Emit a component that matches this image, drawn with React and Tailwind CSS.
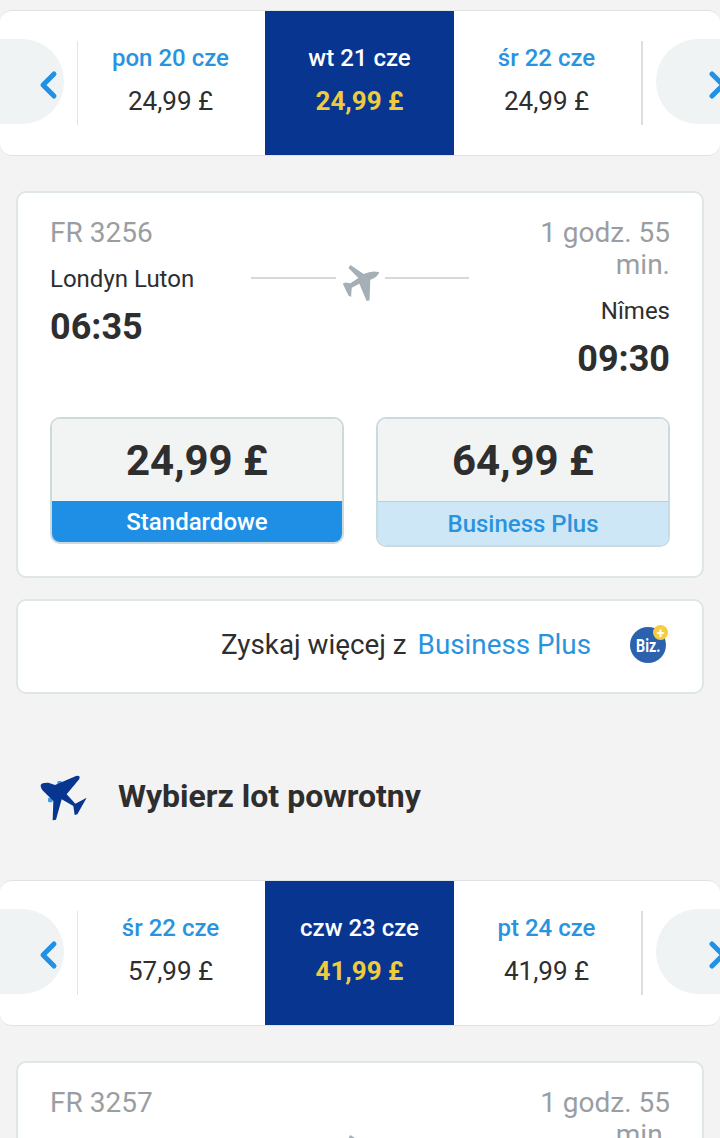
const firstDates = [
  { label: "pon 20 cze", price: "24,99 £" },
  { label: "wt 21 cze", price: "24,99 £", selected: true },
  { label: "śr 22 cze", price: "24,99 £" },
];

const returnDates = [
  { label: "śr 22 cze", price: "57,99 £" },
  { label: "czw 23 cze", price: "41,99 £", selected: true },
  { label: "pt 24 cze", price: "41,99 £" },
];

function GreyPlane() {
  return (
    <svg viewBox="330 70 120 115" className="w-[40px] h-[38px] mx-[4.5px] translate-y-[5px] shrink-0" fill="#a5afb6">
      <path d="M445 95Q443 108 418 118L416 180L407 182L385 130L362 142L360 170L352 165L335 130L342 126L358 128L382 112L352 82L358 73L398 100Q425 88 445 95Z" />
    </svg>
  );
}

function BluePlane() {
  return (
    <svg viewBox="0 0 270 210" className="w-[90px] h-[70px] shrink-0">
      <rect x="112" y="60" width="14" height="14" rx="4" fill="#3f9be6" />
      <rect x="84" y="110" width="14" height="14" rx="4" fill="#3f9be6" />
      <path
        fill="#073590"
        d="M62 72Q66 64 85 65L105 72L168 45Q182 42 178 54L140 100L166 128L200 110L172 160L164 162L160 135L125 115L108 176L98 178L100 120L72 92Q62 84 62 72Z"
      />
    </svg>
  );
}

function Chevron({ flip }) {
  return (
    <svg viewBox="0 0 20 30" className="w-[20px] h-[30px] mt-[6px] shrink-0" fill="none">
      <path
        d={flip ? "M4 4l11 11L4 26" : "M16 4L5 15l11 11"}
        stroke="#2091e5"
        strokeWidth="5"
        strokeLinecap="round"
        strokeLinejoin="round"
      />
    </svg>
  );
}

function DateCell({ label, price, selected }) {
  if (selected) {
    return (
      <div className="w-[189px] h-[144px] shrink-0 bg-[#073590] flex flex-col items-center pt-[29px]">
        <div className="text-[24px] leading-[36px] font-medium text-white">{label}</div>
        <div className="text-[26px] leading-[36px] mt-[7px] font-bold text-[#eecb3c]">{price}</div>
      </div>
    );
  }
  return (
    <div className="w-[187px] h-[144px] shrink-0 flex flex-col items-center pt-[29px] pr-[2px]">
      <div className="text-[24px] leading-[36px] font-medium text-[#2a93e0]">{label}</div>
      <div className="text-[26px] leading-[36px] mt-[7px] text-[#2e2e2e]">{price}</div>
    </div>
  );
}

function DateStrip({ dates }) {
  return (
    <div className="h-[146px] bg-white border-y border-[#dfe3e3] rounded-[12px] flex overflow-hidden shrink-0">
      <div className="w-[78px] h-[144px] flex items-center relative shrink-0">
        <div className="w-[64px] h-[85px] mb-[3px] bg-[#eff3f4] rounded-r-[42px] flex items-center justify-end pr-[6px]">
          <Chevron />
        </div>
        <div className="absolute right-0 top-[30px] w-px h-[84px] bg-[#e3e5e5]" />
      </div>
      {dates.map((d) => (
        <DateCell key={d.label} {...d} />
      ))}
      <div className="flex-1 h-[144px] flex items-center relative">
        <div className="absolute left-0 top-[30px] w-[2px] h-[84px] bg-[#dcdfdf]" />
        <div className="ml-[15px] w-[90px] shrink-0 h-[85px] mb-[3px] bg-[#eff3f4] rounded-l-[42px] flex items-center pl-[52px]">
          <Chevron flip />
        </div>
      </div>
    </div>
  );
}

function FlightCard({ number, from, to, departs, arrives, children }) {
  return (
    <div className="mx-[16px] bg-white border-2 border-[#dfe6e6] rounded-[10px] px-[32px] pt-[22px] shrink-0">
      <div className="flex justify-between">
        <div className="w-[170px]">
          <div className="text-[28px] leading-[36px] text-[#9a9ea3]">{number}</div>
          <div className="text-[24px] leading-[32px] mt-[12px] text-[#2e2e2e]">{from}</div>
          <div className="text-[36px] leading-[42px] mt-[11px] font-bold text-[#2e2e2e]">{departs}</div>
        </div>
        <div className="flex items-center mt-[43px] h-[40px]">
          <div className="w-[85px] h-[2px] bg-[#d8d8d8]" />
          <GreyPlane />
          <div className="w-[84px] h-[2px] bg-[#d8d8d8]" />
        </div>
        <div className="w-[170px] text-right">
          <div className="text-[28px] leading-[32px] pt-[2px] text-[#9a9ea3]">1 godz. 55 min.</div>
          <div className="text-[24px] leading-[32px] mt-[14px] text-[#2e2e2e]">{to}</div>
          <div className="text-[36px] leading-[42px] mt-[11px] font-bold text-[#2e2e2e]">{arrives}</div>
        </div>
      </div>
      {children}
    </div>
  );
}

function FareBoxes() {
  return (
    <div className="flex justify-between items-start mt-[37px] pb-[29px]">
      <div className="w-[294px] rounded-[10px] border-2 border-[#ced9d9] overflow-hidden">
        <div className="h-[82px] bg-[#f2f4f4] flex items-center justify-center text-[42px] font-bold text-[#2e2e2e]">
          24,99 £
        </div>
        <div className="h-[41px] bg-[#1f8fe6] flex items-center justify-center text-[24px] font-medium text-white">
          Standardowe
        </div>
      </div>
      <div className="w-[294px] rounded-[10px] border-2 border-[#c8dbe2] overflow-hidden">
        <div className="h-[82px] bg-[#f2f4f4] flex items-center justify-center text-[42px] font-bold text-[#2e2e2e]">
          64,99 £
        </div>
        <div className="h-[44px] bg-[#cee7f6] border-t border-[#a9d3ec] flex items-center justify-center text-[24px] font-medium text-[#2a93e0]">
          Business Plus
        </div>
      </div>
    </div>
  );
}

export default function App() {
  return (
    <div
      className="w-[720px] h-[1138px] overflow-hidden bg-[#f3f3f3] flex flex-col pt-[10px]"
      style={{ fontFamily: "Roboto, sans-serif" }}
    >
      <DateStrip dates={firstDates} />

      <div className="h-[35px] shrink-0" />
      <FlightCard number="FR 3256" from="Londyn Luton" to="Nîmes" departs="06:35" arrives="09:30">
        <FareBoxes />
      </FlightCard>

      <div className="mt-[21px] mx-[16px] h-[95px] shrink-0 bg-white border-2 border-[#dfe6e6] rounded-[10px] flex items-center justify-end pr-[36px] pb-[3px]">
        <span className="text-[27.8px] text-[#2e2e2e]">Zyskaj więcej z</span>
        <span className="text-[27.8px] text-[#2a93e0] ml-[11px]">Business Plus</span>
        <div className="relative ml-[39px] w-[36px] h-[36px] rounded-full bg-[#2c62ad] flex items-center justify-center">
          <span className="text-[19px] leading-none font-bold text-white scale-x-[0.75]">Biz.</span>
          <div className="absolute -top-[2px] -right-[2px] w-[15px] h-[15px] rounded-full bg-[#f5cd3f] flex items-center justify-center text-[14px] leading-none font-bold text-white">
            +
          </div>
        </div>
      </div>

      <div className="h-[186px] shrink-0 flex items-center pl-[20px] pt-[18px]">
        <BluePlane />
        <h2 className="ml-[8px] text-[32px] font-bold text-[#2e2e2e]">Wybierz lot powrotny</h2>
      </div>

      <DateStrip dates={returnDates} />

      <div className="h-[35px] shrink-0" />
      <FlightCard number="FR 3257" />
    </div>
  );
}
